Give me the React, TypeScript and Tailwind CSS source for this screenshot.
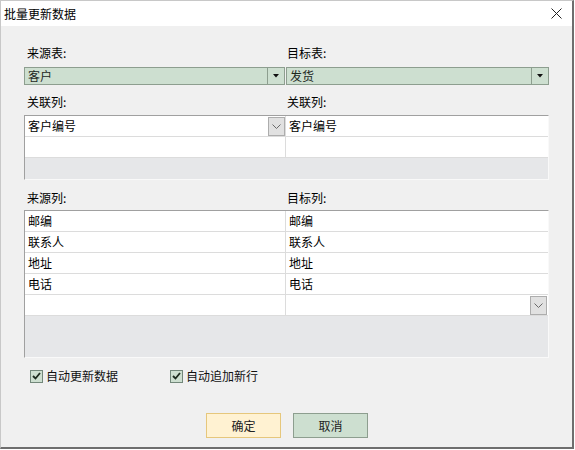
import React from "react";

const font = { fontFamily: '"Noto Sans CJK SC", "Liberation Sans", sans-serif' };

const ComboArrow = () => (
  <svg width="6" height="4" viewBox="0 0 6 4">
    <path d="M0 0 H6 L3 3.5 Z" fill="#111" />
  </svg>
);

const Chevron = () => (
  <svg width="9" height="5" viewBox="0 0 9 5" fill="none">
    <path d="M0.5 0.5 L4.5 4.5 L8.5 0.5" stroke="#6a6a6a" strokeWidth="1" />
  </svg>
);

const Combo = ({ value, width }: { value: string; width: string }) => (
  <div className={`flex h-[18px] ${width} border border-[#8d9e8f] bg-[#cddfd0]`}>
    <div className="flex-1 pl-[3px] text-[12px] leading-[16px] text-[#1d281f]">{value}</div>
    <div className="flex w-[17px] items-center justify-center border-l border-[#8d9e8f]">
      <ComboArrow />
    </div>
  </div>
);

const DropBtn = () => (
  <div className="flex h-[19px] w-[17px] items-center justify-center border border-[#adadad] bg-[#e1e1e1]">
    <Chevron />
  </div>
);

interface Row {
  left: string;
  right: string;
  leftBtn?: boolean;
  rightBtn?: boolean;
}

const Grid = ({ rows, fill }: { rows: Row[]; fill: string }) => (
  <div className="w-[525px] border border-t-[#a0a0a0] border-l-[#a0a0a0] border-r-[#f9f9f9] border-b-[#f9f9f9] bg-[#e6e7e9]">
    {rows.map((r, i) => (
      <div key={i} className="flex h-[21px] border-b border-[#dcdcdc] bg-white">
        <div className="flex w-[261px] items-start border-r border-[#dcdcdc]">
          <span className="flex-1 pl-[3px] text-[12px] leading-[20px] text-black">{r.left}</span>
          {r.leftBtn && (
            <div className="mt-[1px]">
              <DropBtn />
            </div>
          )}
        </div>
        <div className="flex flex-1 items-start">
          <span className="flex-1 pl-[3px] text-[12px] leading-[20px] text-black">{r.right}</span>
          {r.rightBtn && (
            <div className="mr-[1px] mt-[1px]">
              <DropBtn />
            </div>
          )}
        </div>
      </div>
    ))}
    <div className={fill} />
  </div>
);

const Labels = ({ left, right }: { left: string; right: string }) => (
  <div className="flex h-[16px] text-[12px] leading-[16px] text-black">
    <div className="w-[262px] pl-[3px]">{left}</div>
    <div className="pl-[1px]">{right}</div>
  </div>
);

const Check = ({ label, width }: { label: string; width: string }) => (
  <div className={`flex items-center ${width}`}>
    <div className="flex h-[13px] w-[13px] items-center justify-center border border-[#72877a] bg-[#cddfd0]">
      <svg width="9" height="8" viewBox="0 0 9 8" fill="none">
        <path d="M1 4 L3.5 6.5 L8 1" stroke="#1c2b1e" strokeWidth="1.8" />
      </svg>
    </div>
    <span className="ml-[3px] text-[12px] leading-[16px] text-[#111]">{label}</span>
  </div>
);

export default function App() {
  return (
    <div className="h-[450px] w-[575px] bg-white" style={font}>
      <div className="flex h-[449px] w-[574px] flex-col border-l border-t border-r-2 border-b-2 border-l-[#c8c8c8] border-t-[#c8c8c8] border-r-[#6e6e6e] border-b-[#6e6e6e]">
        <div className="flex h-[25px] items-center justify-between bg-white pl-[3px] pr-[10px]">
          <span className="text-[12px] leading-[16px] text-black">批量更新数据</span>
          <svg width="11" height="11" viewBox="0 0 11 11" fill="none">
            <path d="M0.5 0.5 L10.5 10.5 M10.5 0.5 L0.5 10.5" stroke="#222" strokeWidth="1" />
          </svg>
        </div>

        <div className="flex-1 bg-[#f0f0f0] pl-[23px] pt-[19px]">
          <Labels left="来源表:" right="目标表:" />
          <div className="mt-[6px] flex gap-[1px]">
            <Combo value="客户" width="w-[261px]" />
            <Combo value="发货" width="w-[263px]" />
          </div>

          <div className="mt-[9px]">
            <Labels left="关联列:" right="关联列:" />
          </div>
          <div className="mt-[5px]">
            <Grid
              rows={[
                { left: "客户编号", right: "客户编号", leftBtn: true },
                { left: "", right: "" },
              ]}
              fill="h-[21px]"
            />
          </div>

          <div className="mt-[10px]">
            <Labels left="来源列:" right="目标列:" />
          </div>
          <div className="mt-[4px]">
            <Grid
              rows={[
                { left: "邮编", right: "邮编" },
                { left: "联系人", right: "联系人" },
                { left: "地址", right: "地址" },
                { left: "电话", right: "电话" },
                { left: "", right: "", rightBtn: true },
              ]}
              fill="h-[41px]"
            />
          </div>

          <div className="mt-[10px] flex h-[16px] pl-[6px]">
            <Check label="自动更新数据" width="w-[140px]" />
            <Check label="自动追加新行" width="w-[140px]" />
          </div>

          <div className="mt-[29px] flex gap-[12px] pl-[182px]">
            <button className="h-[25px] w-[75px] border border-[#e6c77c] bg-[#fff2d2] text-[12px] text-[#222]">
              确定
            </button>
            <button className="h-[25px] w-[75px] border border-[#8d9e8f] bg-[#cddfd0] text-[12px] text-[#222]">
              取消
            </button>
          </div>
        </div>
      </div>
    </div>
  );
}
